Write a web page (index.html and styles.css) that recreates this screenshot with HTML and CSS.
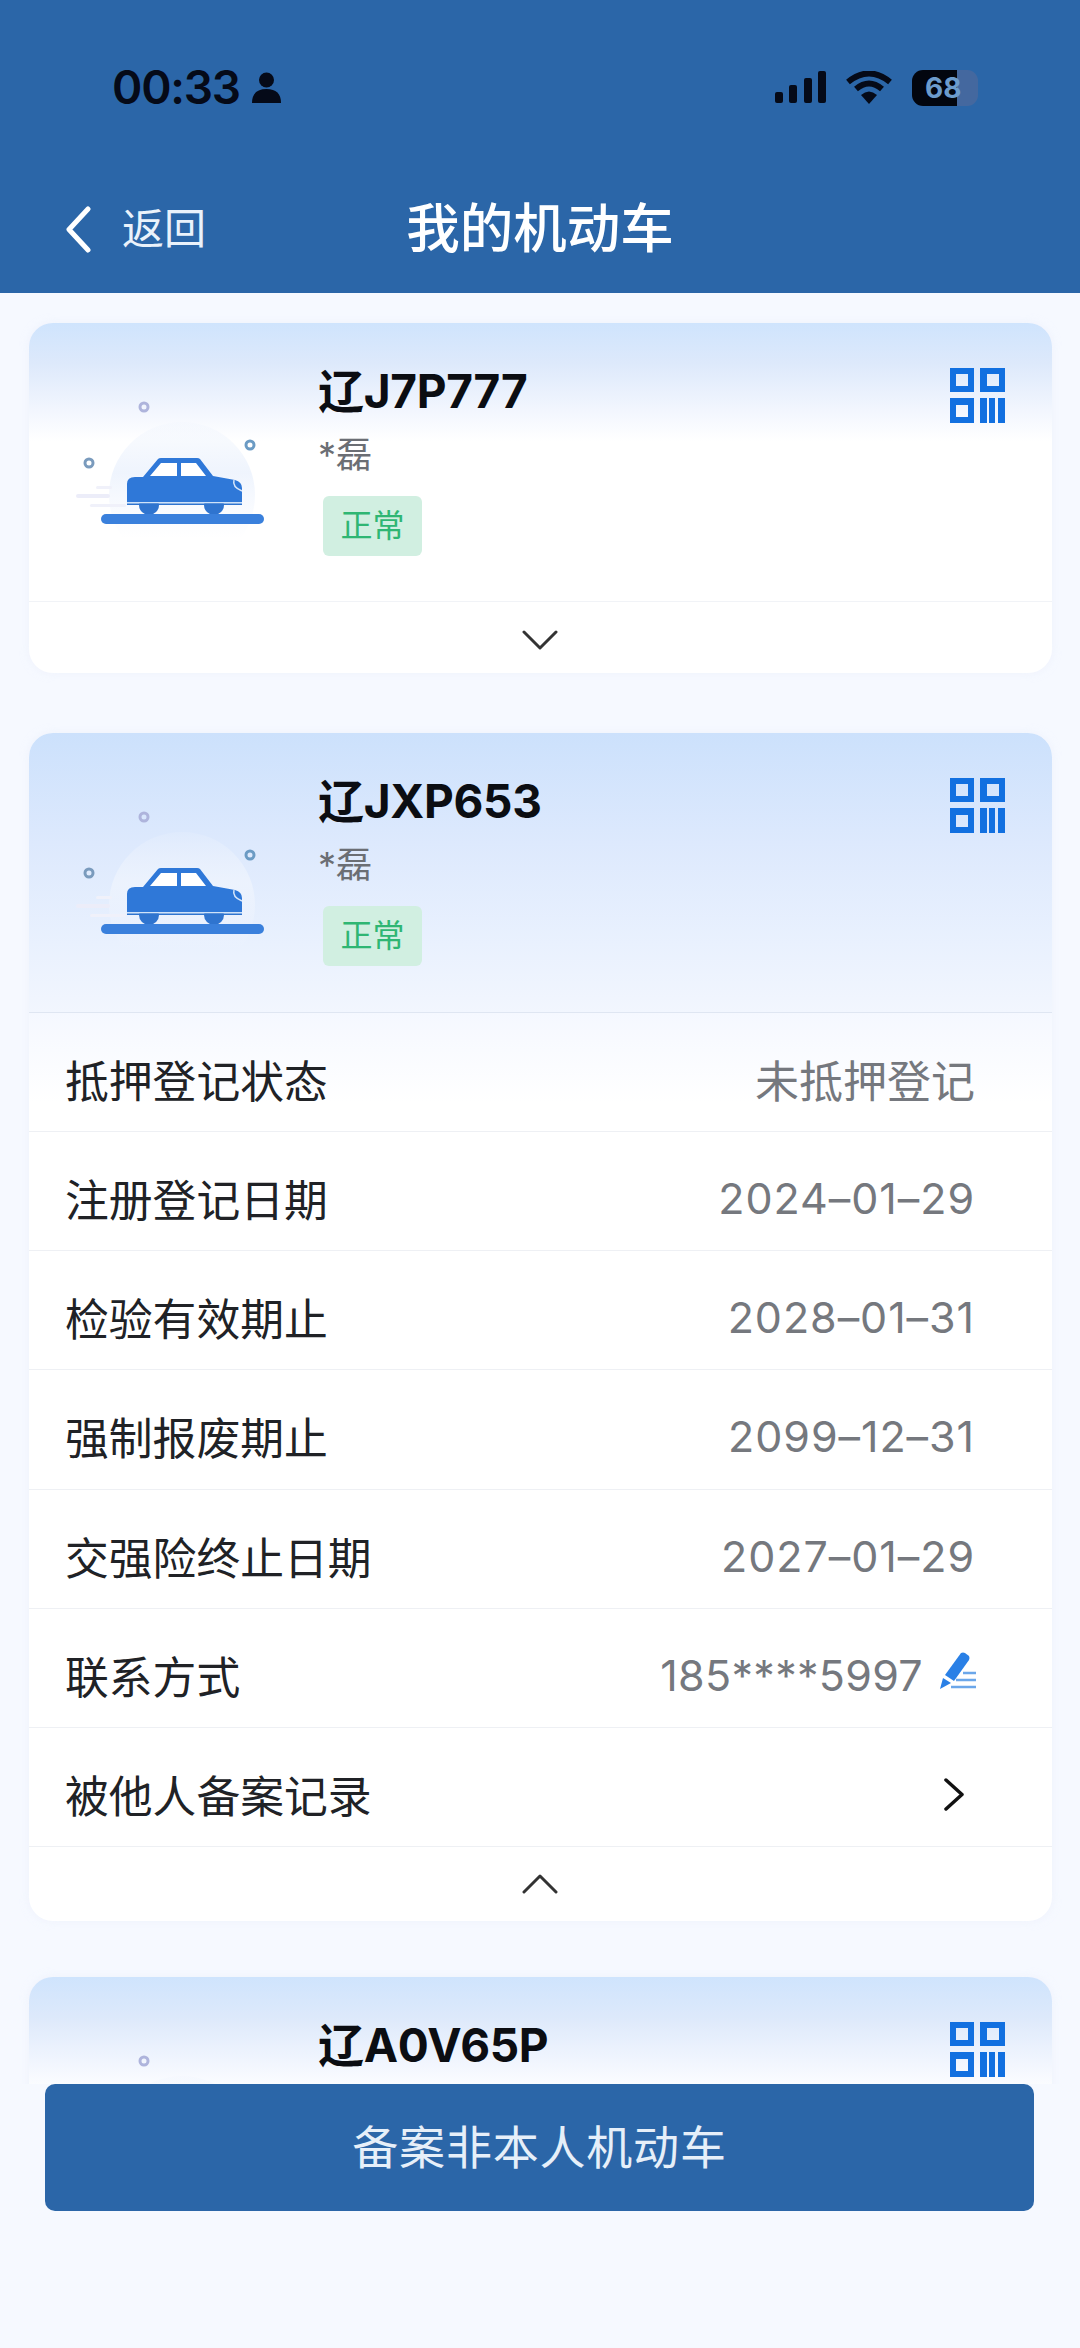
FILE: index.html
```html
<!DOCTYPE html>
<html>
<head>
    <meta charset="utf-8">
    <title>我的机动车</title>
    <link rel="stylesheet" href="styles.css">
</head>
<body>
    <svg class="defs" xmlns="http://www.w3.org/2000/svg">
        <defs>
            <linearGradient id="halo" x1="0" y1="0" x2="0" y2="1">
                <stop offset="0" stop-color="#edf3fd" stop-opacity="0.2"/>
                <stop offset="0.35" stop-color="#edf3fd" stop-opacity="0.9"/>
                <stop offset="0.8" stop-color="#f2f6fe" stop-opacity="0"/>
            </linearGradient>
        </defs>
        <symbol id="car" viewBox="0 0 210 150">
            <circle cx="112" cy="105" r="73" fill="url(#halo)"/>
            <rect x="6" y="104" width="34" height="4" rx="2" fill="#ecedf9"/>
            <rect x="26" y="96" width="16" height="3" rx="1.5" fill="#f0f1fa"/>
            <rect x="20" y="114" width="36" height="3" rx="1.5" fill="#f0f1fa"/>
            <circle cx="74" cy="17" r="4" fill="none" stroke="#aeb4dc" stroke-width="3"/>
            <circle cx="180" cy="55" r="4" fill="none" stroke="#6b9bc4" stroke-width="3"/>
            <circle cx="19" cy="73" r="4" fill="none" stroke="#7a9bbd" stroke-width="3"/>
            <circle cx="79" cy="115" r="10" fill="#2f74cf"/>
            <circle cx="144" cy="115" r="10" fill="#2f74cf"/>
            <path d="M73 87 L88 69 Q89 68 91 68 H127 Q129 68 130 69 L143 86 L165 90 Q172 92 172 98 V112 H57 V94 Q57 87 65 87 Z" fill="#2f78d8"/>
            <path d="M80 86 L91 73 H107 V86 Z M111 73 H126 L136 86 H111 Z" fill="#fff"/>
            <rect x="57" y="112" width="115" height="1.5" fill="#cfe2f8"/>
            <rect x="57" y="113.5" width="115" height="1.5" fill="#2f74cf"/>
            <path d="M164 90 Q162 97 172 101" fill="none" stroke="#d6e6fa" stroke-width="1.5"/>
            <rect x="31" y="124" width="163" height="10" rx="5" fill="#3a80dc"/>
        </symbol>
        <symbol id="qr" viewBox="0 0 55 55">
            <path fill="#1270e0" fill-rule="evenodd" d="M0 0H24V24H0Z M6 6V18H18V6Z M30 0H55V24H30Z M37 6V18H49V6Z M0 30H24V55H0Z M6 37V49H18V37Z"/>
            <path fill="#1270e0" d="M30 30H37V55H30Z M39 30H45V55H39Z M48 30H55V55H48Z"/>
        </symbol>
    </svg>

    <div class="page">
        <header class="top">
            <div class="status">
                <div class="status-left">
                    <span class="time">00:33</span>
                    <svg class="person" viewBox="0 0 31 31"><circle cx="15.5" cy="8" r="7.5"/><path d="M1 31 Q1 17 15.5 17 Q30 17 30 31 Z"/></svg>
                </div>
                <div class="status-right">
                    <svg class="signal" viewBox="0 0 52 33"><rect x="1" y="21" width="8" height="11" rx="2"/><rect x="15" y="14" width="8" height="18" rx="2"/><rect x="30" y="7" width="8" height="25" rx="2"/><rect x="44" y="0" width="8" height="32" rx="2"/></svg>
                    <svg class="wifi" viewBox="0 0 46 33"><path d="M2 11 Q23 -6 44 11" fill="none" stroke="#050a18" stroke-width="6"/><path d="M10 18 Q23 7 36 18" fill="none" stroke="#050a18" stroke-width="6"/><path d="M15 24 L23 33 L31 24 Q23 17 15 24 Z" fill="#050a18"/></svg>
                    <div class="battery">68</div>
                </div>
            </div>
            <nav class="nav">
                <a class="back">
                    <svg class="back-icon" viewBox="0 0 26 47"><path d="M23 3 L4 23.5 L23 44" fill="none" stroke="#fff" stroke-width="5" stroke-linecap="round" stroke-linejoin="round"/></svg>
                    <span class="back-text">返回</span>
                </a>
                <h1 class="title">我的机动车</h1>
            </nav>
        </header>

        <main class="list">
            <section class="card">
                <div class="card-head">
                    <svg class="car"><use href="#car"/></svg>
                    <div class="info">
                        <div class="plate">辽J7P777</div>
                        <div class="owner">*磊</div>
                        <span class="badge">正常</span>
                    </div>
                    <svg class="qr"><use href="#qr"/></svg>
                </div>
                <div class="toggle">
                    <svg class="chev" viewBox="0 0 36 20"><path d="M2 2 L18 18 L34 2"/></svg>
                </div>
            </section>

            <section class="card card-open">
                <div class="card-head">
                    <svg class="car"><use href="#car"/></svg>
                    <div class="info">
                        <div class="plate">辽JXP653</div>
                        <div class="owner">*磊</div>
                        <span class="badge">正常</span>
                    </div>
                    <svg class="qr"><use href="#qr"/></svg>
                </div>
                <div class="row row-first"><span class="label">抵押登记状态</span><span class="value">未抵押登记</span></div>
                <div class="row"><span class="label">注册登记日期</span><span class="value num">2024–01–29</span></div>
                <div class="row"><span class="label">检验有效期止</span><span class="value num">2028–01–31</span></div>
                <div class="row"><span class="label">强制报废期止</span><span class="value num">2099–12–31</span></div>
                <div class="row"><span class="label">交强险终止日期</span><span class="value num">2027–01–29</span></div>
                <div class="row row-phone">
                    <span class="label">联系方式</span>
                    <span class="value phone">185****5997</span>
                    <svg class="pen" viewBox="0 0 37 37">
                        <path d="M22 1 Q24 0 26 1 L30 4 Q31 6 30 8 L15 29 L6 23 Z" fill="#2a80e6"/>
                        <path d="M4 26 L12 31 L1 37 Z" fill="#2a80e6"/>
                        <path d="M24 21 H37 M17 28 H37 M12 35 H37" stroke="#6ba7ea" stroke-width="2.5"/>
                    </svg>
                </div>
                <div class="row row-link">
                    <span class="label">被他人备案记录</span>
                    <svg class="arrow" viewBox="0 0 20 33"><path d="M2 2 L18 16.5 L2 31"/></svg>
                </div>
                <div class="toggle">
                    <svg class="chev" viewBox="0 0 36 20"><path d="M2 18 L18 2 L34 18"/></svg>
                </div>
            </section>

            <section class="card">
                <div class="card-head">
                    <svg class="car"><use href="#car"/></svg>
                    <div class="info">
                        <div class="plate">辽A0V65P</div>
                    </div>
                    <svg class="qr"><use href="#qr"/></svg>
                </div>
            </section>
        </main>

        <footer class="bottom">
            <button class="add">备案非本人机动车</button>
        </footer>
    </div>
</body>
</html>
```

FILE: styles.css
```css
* {
    box-sizing: border-box;
}

body {
    margin: 0;
    background: #f6f9ff;
    font-family: "Inter", "Noto Sans CJK SC", sans-serif;
}

.defs {
    display: block;
    width: 0;
    height: 0;
}

.page {
    display: flex;
    flex-direction: column;
    height: 2348px;
    overflow: hidden;
}

/* header */
.top {
    flex: none;
    height: 293px;
    padding-top: 69px;
    background: #2b66a8;
}

.status {
    display: flex;
    justify-content: space-between;
    align-items: center;
    height: 37px;
    padding: 0 102px 0 112px;
}

.status-left,
.status-right {
    display: flex;
    align-items: center;
}

.time {
    font-size: 46px;
    font-weight: 600;
    line-height: 37px;
    color: #050a18;
    letter-spacing: -1.2px;
}

.person {
    width: 31px;
    height: 31px;
    margin-left: 11px;
    fill: #050a18;
}

.signal {
    width: 52px;
    height: 33px;
    fill: #050a18;
}

.wifi {
    width: 46px;
    height: 33px;
    margin-left: 20px;
}

.battery {
    width: 66px;
    height: 36px;
    margin-left: 20px;
    padding-left: 13px;
    border-radius: 11px;
    background: linear-gradient(90deg, #02060f 68%, #44689f 68%);
    color: #6c9ccc;
    font-size: 28px;
    font-weight: 700;
    line-height: 36px;
}

.nav {
    display: grid;
    grid-template-columns: 1fr auto 1fr;
    align-items: center;
    height: 58px;
    margin-top: 94px;
    padding-left: 65px;
    padding-right: 65px;
}

.back {
    display: flex;
    align-items: center;
    color: #eaf2fb;
    font-size: 42px;
}

.back-icon {
    width: 26px;
    height: 47px;
    margin-right: 31px;
}

.back-text {
    margin-top: -8px;
}

.title {
    margin: 0;
    color: #fff;
    font-size: 53.5px;
    font-weight: 500;
    line-height: 58px;
}

/* cards */
.list {
    flex: 1;
    min-height: 0;
    overflow: hidden;
    padding: 30px 28px 0 29px;
}

.card {
    margin-bottom: 60px;
    border-radius: 24px;
    background: linear-gradient(180deg, #cfe4fd 0, #dde9fb 40px, #f2f6fe 87px, #fff 118px);
    box-shadow: 0 0 10px rgba(225, 232, 245, 0.35);
}

.card-open {
    margin-bottom: 56px;
    background: #fff;
}

.card-open .card-head {
    height: 280px;
    border-radius: 24px 24px 0 0;
    background: linear-gradient(180deg, #cce1fc 0, #dde9fd 110px, #e9f1fe 210px, #f2f6fe 280px);
    border-bottom-color: #dfe6f2;
}

.card-head {
    display: flex;
    align-items: flex-start;
    height: 279px;
    padding: 45px 47px 0 41px;
    border-bottom: 1px solid #f1f3f7;
}

.car {
    flex: none;
    width: 210px;
    height: 150px;
    margin-top: 22px;
}

.info {
    flex: 1;
    margin-left: 38px;
}

.plate {
    color: #0b0d12;
    font-size: 46px;
    font-weight: 700;
    line-height: 46px;
    letter-spacing: -0.3px;
}

.owner {
    margin-top: 21px;
    color: #6b6e74;
    font-size: 36px;
    line-height: 40px;
}

.badge {
    display: inline-block;
    width: 99px;
    height: 60px;
    margin: 21px 0 0 5px;
    border-radius: 6px;
    background: #d1efe1;
    color: #2fb673;
    font-size: 32px;
    line-height: 60px;
    text-align: center;
}

.qr {
    flex: none;
    width: 55px;
    height: 55px;
}

.toggle {
    display: flex;
    justify-content: center;
    align-items: center;
    height: 71px;
    padding-top: 5px;
    padding-right: 1px;
}

.card-open .toggle {
    height: 74px;
    padding-top: 0;
}

.chev {
    width: 36px;
    height: 20px;
    fill: none;
    stroke: #333;
    stroke-width: 3;
    stroke-linecap: round;
    stroke-linejoin: round;
}

/* detail rows */
.row {
    display: flex;
    align-items: center;
    height: 119.15px;
    padding: 14px 77px 0 36px;
    border-bottom: 1px solid #eef0f4;
}

.row-first {
    background: linear-gradient(180deg, #f5f8ff, #fff 90px);
}

.label {
    flex: 1;
    color: #202226;
    font-size: 43.8px;
}

.value {
    color: #75787e;
    font-size: 44px;
}

.num {
    font-size: 43px;
    letter-spacing: 0.95px;
}

.phone {
    font-size: 43px;
    letter-spacing: 0.3px;
}

.row-phone {
    padding-right: 76px;
}

.pen {
    width: 37px;
    height: 37px;
    margin-top: -8px;
    margin-left: 16px;
}

.row-link {
    padding-right: 88px;
}

.arrow {
    width: 20px;
    height: 33px;
    margin-top: 2px;
    fill: none;
    stroke: #111;
    stroke-width: 3.5;
    stroke-linecap: round;
    stroke-linejoin: round;
}

/* footer */
.bottom {
    flex: none;
    height: 264px;
    padding: 0 46px 0 45px;
    background: #f6f9ff;
}

.add {
    display: block;
    width: 100%;
    height: 127px;
    padding-bottom: 8px;
    border: none;
    border-radius: 10px;
    background: #2b66a8;
    color: #e6eff9;
    font-family: inherit;
    font-size: 46px;
    letter-spacing: 0.8px;
}
```
